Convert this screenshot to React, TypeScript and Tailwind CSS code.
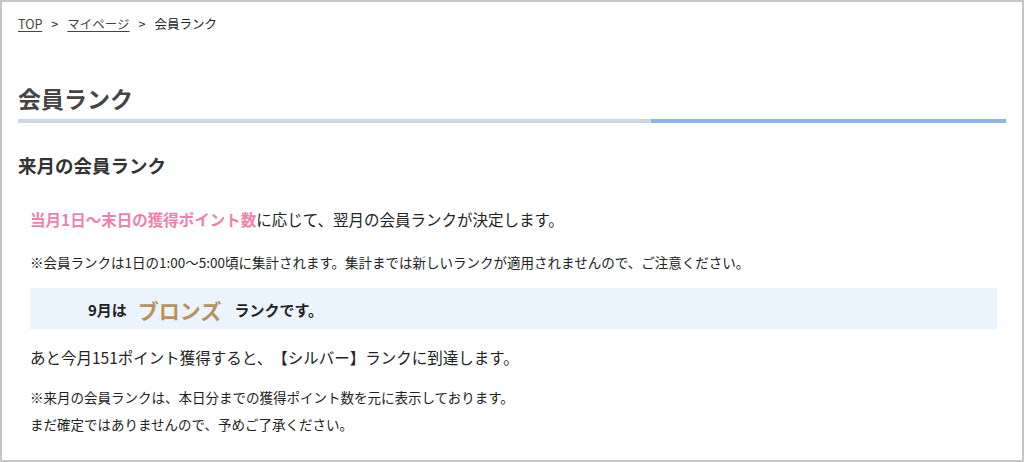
import React from "react";

const FONT = { fontFamily: '"Noto Sans CJK JP", "Noto Sans", sans-serif' };

export default function App() {
  return (
    <div
      className="h-[462px] w-[1024px] overflow-hidden border-2 border-[#c6c6c6] bg-white px-4 pt-3 text-[#222] [text-spacing-trim:space-all]"
      style={FONT}
    >
      {/* breadcrumb */}
      <nav className="flex items-center gap-[9px] text-[12.5px] leading-[20px]">
        <a className="text-[#444] underline underline-offset-2">TOP</a>
        <span>&gt;</span>
        <a className="text-[#444] underline underline-offset-2">マイページ</a>
        <span>&gt;</span>
        <span>会員ランク</span>
      </nav>

      {/* title */}
      <h1 className="mt-[48px] text-[23px] font-bold leading-[32px] text-[#444]">会員ランク</h1>
      <div className="mt-[5px] flex h-[4px]">
        <div className="w-[633px] bg-[#cdd7e2]" />
        <div className="flex-1 bg-[#8cb6e1]" />
      </div>

      <h2 className="mt-[28px] text-[18.5px] font-bold leading-[28px] text-[#333]">来月の会員ランク</h2>

      <div className="ml-3 mr-[9px]">
        <p className="mt-[28px] text-[15.5px] leading-[24px]">
          <span className="font-bold text-[#f07fae]">当月1日〜末日の獲得ポイント数</span>
          に応じて、翌月の会員ランクが決定します。
        </p>
        <p className="mt-[21px] text-[13.5px] leading-[20px]">
          ※会員ランクは1日の1:00〜5:00頃に集計されます。集計までは新しいランクが適用されませんので、ご注意ください。
        </p>

        {/* rank box */}
        <div className="mt-[16px] flex h-[41px] items-center bg-[#ebf4fc] pl-[58px] pt-[3px]">
          <span className="text-[15px] font-bold">9月は</span>
          <span className="ml-[11px] text-[21px] font-bold leading-[28px] text-[#b8915f]">ブロンズ</span>
          <span className="ml-[13px] text-[15px] font-bold">ランクです。</span>
        </div>

        <p className="mt-[16px] text-[15.5px] leading-[24px]">
          あと今月151ポイント獲得すると、【シルバー】ランクに到達します。
        </p>
        <p className="mt-[15px] text-[13.5px] leading-[27px]">
          ※来月の会員ランクは、本日分までの獲得ポイント数を元に表示しております。
          <br />
          まだ確定ではありませんので、予めご了承ください。
        </p>
      </div>
    </div>
  );
}
